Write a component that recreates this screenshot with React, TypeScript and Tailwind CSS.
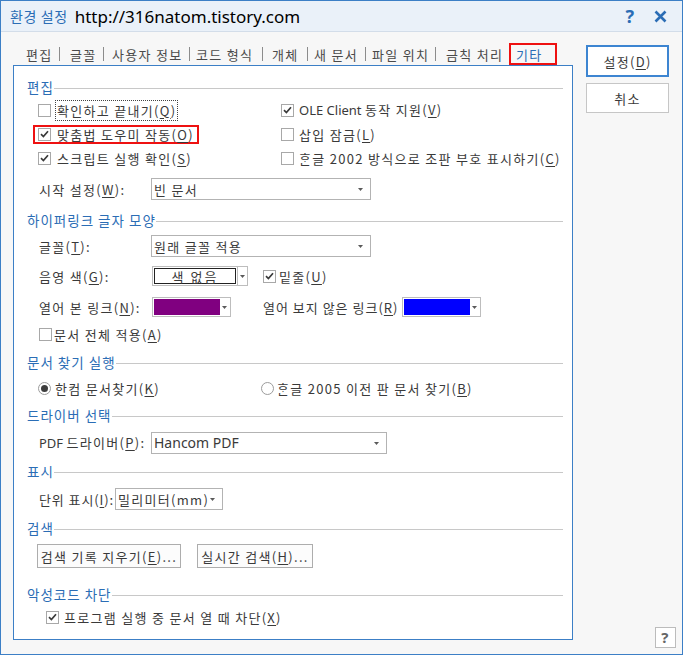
import React from "react"

function K({ k }: { k: string }) {
	return (
		<>
			(<span className="underline underline-offset-[2px]">{k}</span>)
		</>
	)
}

function Box({ checked }: { checked?: boolean }) {
	return (
		<span className="flex h-[13px] w-[13px] shrink-0 items-center justify-center border border-[#a8a8a8] bg-white">
			{checked && (
				<svg width="9" height="8" viewBox="0 0 9 8">
					<path d="M1 4.2 L3.4 6.6 L8 1.2" fill="none" stroke="#3a3a3a" strokeWidth="1.7" />
				</svg>
			)}
		</span>
	)
}

function Radio({ on }: { on?: boolean }) {
	return (
		<span className="flex h-[13px] w-[13px] shrink-0 items-center justify-center rounded-full border border-[#9c9c9c] bg-white">
			{on && <span className="h-[7px] w-[7px] rounded-full bg-[#3d3d3d]" />}
		</span>
	)
}

function Caret() {
	return (
		<svg width="5" height="3" viewBox="0 0 5 3" className="shrink-0">
			<path d="M0 0 H5 L2.5 3 Z" fill="#5a5a5a" />
		</svg>
	)
}

function Heading({ title, className = "" }: { title: string; className?: string }) {
	return (
		<div className={`flex h-5 items-center text-[13.5px] tracking-[1px] text-[#2b6db5] ${className}`}>
			<span>{title}</span>
			<span className="h-px flex-1 bg-[#c8c8c8]" />
		</div>
	)
}

function CheckRow({
	checked,
	gap,
	children,
}: {
	checked?: boolean
	gap: string
	children: React.ReactNode
}) {
	return (
		<div className={`flex h-6 items-center ${gap}`}>
			<Box checked={checked} />
			<span className="whitespace-nowrap">{children}</span>
		</div>
	)
}

function Select({ value, width, latin }: { value: string; width: string; latin?: boolean }) {
	return (
		<div
			className={`flex h-[22px] items-center justify-between border border-[#b3b3b3] bg-white pl-[2px] pr-[7px] ${width}`}
		>
			<span className={latin ? "font-['Noto_Sans',sans-serif] text-[14px] tracking-normal" : "whitespace-nowrap"}>
				{value}
			</span>
			<Caret />
		</div>
	)
}

function ColorPick({ color }: { color: string }) {
	return (
		<div className="flex h-5 w-[79px] shrink-0 border border-[#bdbdbd] bg-white p-px">
			<div className={`h-full w-[66px] ${color}`} />
			<div className="flex flex-1 items-center justify-center">
				<Caret />
			</div>
		</div>
	)
}

// each tab slot runs from the start of its label to the start of the next one
const tabs = [
	{ label: "편집", slot: "w-[44px] pr-[10px]" },
	{ label: "글꼴", slot: "w-[42px] pr-[8px]" },
	{ label: "사용자 정보", slot: "w-[84px] pr-[6px]" },
	{ label: "코드 형식", slot: "w-[76px] pr-[9px]" },
	{ label: "개체", slot: "w-[42px] pr-[6px]" },
	{ label: "새 문서", slot: "w-[58px] pr-[6px]" },
	{ label: "파일 위치", slot: "w-[74px] pr-[10px]" },
]

function Tabs() {
	return (
		<div className="mt-[11px] flex h-[22px] items-center pl-[13px] text-[#4a4a4a]">
			{tabs.map((t) => (
				<div key={t.label} className={`flex items-center justify-between ${t.slot}`}>
					<span className="whitespace-nowrap">{t.label}</span>
					<span className="h-[14px] w-px bg-[#8c8c8c]" />
				</div>
			))}
			<div className="w-[63px] whitespace-nowrap">금칙 처리</div>
			<span className="flex h-[22px] w-[48px] items-center border-2 border-[#ee1111] pl-[5px] text-[#2b6db5]">
				기타
			</span>
		</div>
	)
}

function Panel() {
	return (
		<div className="h-[575px] border border-[#3c7fc6] bg-white pl-[13px] pr-[9px] pt-[12px]">
			<Heading title="편집" />
			<div className="ml-[11px] grid grid-cols-[243px_1fr]">
				<CheckRow gap="gap-[5px]">
					<span className="outline outline-1 outline-dotted outline-[#444] px-px">
						확인하고 끝내기<K k="Q" />
					</span>
				</CheckRow>
				<CheckRow checked gap="gap-[5px]">
					<span className="font-['Noto_Sans',sans-serif] tracking-normal">OLE Client </span>
					동작 지원<K k="V" />
				</CheckRow>
				<div className="flex h-6 items-center">
					<span className="-ml-[5px] flex h-[19px] items-center gap-[6px] border-2 border-[#ee1111] pl-[3px] pr-[3px]">
						<Box checked />
						<span className="whitespace-nowrap">
							맞춤법 도우미 작동<K k="O" />
						</span>
					</span>
				</div>
				<CheckRow gap="gap-[5px]">
					삽입 잠금<K k="L" />
				</CheckRow>
				<CheckRow checked gap="gap-[6px]">
					스크립트 실행 확인<K k="S" />
				</CheckRow>
				<CheckRow gap="gap-[5px]">
					ᄒᆞᆫ글 2002 방식으로 조판 부호 표시하기<K k="C" />
				</CheckRow>
			</div>

			<div className="ml-[12px] mt-[8px] flex items-center">
				<span className="w-[112px] whitespace-nowrap">
					시작 설정<K k="W" />:
				</span>
				<Select value="빈 문서" width="w-[220px]" />
			</div>

			<Heading title="하이퍼링크 글자 모양" className="mt-[11px]" />
			<div className="ml-[12px] mt-[4px] flex items-center">
				<span className="w-[112px] whitespace-nowrap">
					글꼴<K k="T" />:
				</span>
				<Select value="원래 글꼴 적용" width="w-[220px]" />
			</div>

			<div className="ml-[12px] mt-[9px] flex h-5 items-center">
				<span className="w-[113px] whitespace-nowrap">
					음영 색<K k="G" />:
				</span>
				<div className="flex h-5 w-[86px] border border-[#bdbdbd] bg-white p-px">
					<div className="flex flex-1 items-center justify-center border border-[#222] tracking-[2px]">색 없음</div>
				</div>
				<div className="flex h-5 w-[10px] items-center justify-center border border-l-0 border-[#bdbdbd]">
					<Caret />
				</div>
				<div className="ml-[15px] flex items-center gap-[3px]">
					<Box checked />
					<span>
						밑줄<K k="U" />
					</span>
				</div>
			</div>

			<div className="ml-[12px] mt-[11px] flex h-5 items-center">
				<span className="w-[113px] whitespace-nowrap">
					열어 본 링크<K k="N" />:
				</span>
				<ColorPick color="bg-[#800080]" />
				<span className="ml-[32px] w-[139px] whitespace-nowrap tracking-[1px]">
					열어 보지 않은 링크<K k="R" />
				</span>
				<ColorPick color="bg-[#0000ff]" />
			</div>

			<div className="ml-[12px] mt-[5px] flex h-6 items-center gap-[2px]">
				<Box />
				<span>
					문서 전체 적용<K k="A" />
				</span>
			</div>

			<Heading title="문서 찾기 실행" className="mt-[7px]" />
			<div className="ml-[11px] mt-[3px] flex h-6 items-center">
				<div className="flex w-[223px] items-center gap-[4px]">
					<Radio on />
					<span>
						한컴 문서찾기<K k="K" />
					</span>
				</div>
				<div className="flex items-center gap-[3px]">
					<Radio />
					<span>
						ᄒᆞᆫ글 2005 이전 판 문서 찾기<K k="B" />
					</span>
				</div>
			</div>

			<Heading title="드라이버 선택" className="mt-[6px]" />
			<div className="ml-[12px] mt-[6px] flex items-center">
				<span className="w-[112px] whitespace-nowrap">
					<span className="font-['Noto_Sans',sans-serif] tracking-normal">PDF </span>
					드라이버<K k="P" />:
				</span>
				<Select value="Hancom PDF" width="w-[236px]" latin />
			</div>

			<Heading title="표시" className="mt-[8px]" />
			<div className="ml-[12px] mt-[6px] flex items-center">
				<span className="w-[76px] whitespace-nowrap tracking-[0.9px]">
					단위 표시<K k="I" />:
				</span>
				<Select value="밀리미터(mm)" width="w-[108px]" />
			</div>

			<Heading title="검색" className="mt-[9px]" />
			<div className="ml-[10px] mt-[5px] flex items-center">
				<button className="flex h-6 w-[144px] items-center justify-center whitespace-nowrap border border-[#adadad] bg-[#fcfcfc] text-[#3a3a3a]">
					검색 기록 지우기<K k="E" />...
				</button>
				<button className="ml-[16px] flex h-6 w-[116px] items-center justify-center whitespace-nowrap border border-[#adadad] bg-[#fcfcfc] text-[#3a3a3a]">
					실시간 검색<K k="H" />...
				</button>
			</div>

			<Heading title="악성코드 차단" className="mt-[17px]" />
			<div className="ml-[19px]">
				<CheckRow checked gap="gap-[5px]">
					프로그램 실행 중 문서 열 때 차단<K k="X" />
				</CheckRow>
			</div>
		</div>
	)
}

export default function App() {
	return (
		<div className="flex h-[655px] w-[683px] flex-col border border-[#3c7fc6] bg-[#f7f7f7] font-['Noto_Sans_CJK_KR',sans-serif] text-[13px] leading-none tracking-[1.3px] text-[#3a3a3a]">
			<div className="flex h-[31px] shrink-0 items-center border-b border-[#d3dde9] bg-[#eaf1f9] tracking-normal">
				<span className="ml-[9px] text-[14px] tracking-[0.6px] text-[#2b6db5]">환경 설정</span>
				<span className="ml-[7px] font-['Noto_Sans',sans-serif] text-[17px] text-black">
					http://316natom.tistory.com
				</span>
				<span className="ml-auto font-['Noto_Sans',sans-serif] text-[18px] font-bold text-[#2b6db5]">?</span>
				<svg width="13" height="13" viewBox="0 0 13 13" className="ml-[20px] mr-[15px]">
					<path d="M1.5 1.5 L11.5 11.5 M11.5 1.5 L1.5 11.5" stroke="#2b6db5" strokeWidth="2.6" />
				</svg>
			</div>

			<div className="flex flex-1">
				<div className="ml-[12px] w-[560px]">
					<Tabs />
					<Panel />
				</div>
				<div className="ml-[13px] flex w-[90px] flex-col">
					<button className="mt-[13px] flex h-[32px] w-[83px] items-center justify-center border-2 border-[#3d85d1] bg-white text-[#3a3a3a]">
						설정<K k="D" />
					</button>
					<button className="mt-[6px] flex h-[30px] w-[83px] items-center justify-center border border-[#c6c6c6] bg-white text-[#3a3a3a]">
						취소
					</button>
					<div className="mb-[6px] ml-[69px] mt-auto flex h-[21px] w-[21px] items-center justify-center border border-[#bcbcbc] bg-white font-['Noto_Sans',sans-serif] text-[15px] font-bold text-[#666]">
						?
					</div>
				</div>
			</div>
		</div>
	)
}
